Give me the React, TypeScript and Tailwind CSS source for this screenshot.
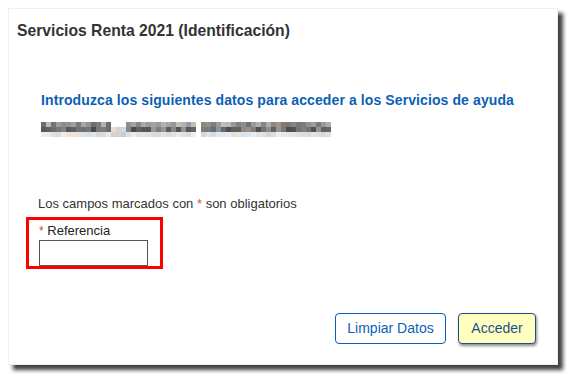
import React from 'react';

// pixelated (censored) name line
const segments: [number, number][] = [
  [0, 14],
  [17, 31],
  [32, 58],
];
const dash: [number, number] = [14, 17];

const shade = (i: number, row: number, light: boolean) => {
  const r = Math.abs(Math.sin(i * 12.9898 + row * 78.233) * 43758.5453) % 1;
  const base = light ? 215 : row === 0 ? 150 : row === 1 ? 115 : 226;
  const spread = light || row === 2 ? 24 : 80;
  const v = Math.round(base + (r - 0.5) * spread);
  const tint = Math.round((((r * 7) % 1) - 0.5) * 18);
  return `rgb(${v + tint}, ${v}, ${v - tint})`;
};

const Mosaic: React.FC = () => {
  const colour = (i: number, row: number) => {
    if (segments.some(([a, b]) => i >= a && i < b)) return shade(i, row, false);
    if (i >= dash[0] && i < dash[1] && row > 0) return shade(i, row, true);
    return 'transparent';
  };
  return (
    <div className="h-[16px] w-[295px]">
      {[0, 1, 2].map(row => (
        <div key={row} className="flex h-[5px]">
          {Array.from({ length: 59 }).map((_, i) => (
            <div key={i} className="w-[5px] h-[5px]" style={{ backgroundColor: colour(i, row) }} />
          ))}
        </div>
      ))}
    </div>
  );
};

const App: React.FC = () => {
  return (
    <div className="w-[567px] h-[374px] bg-white pt-2 pl-2" style={{ fontFamily: '"Liberation Sans", Arial, sans-serif' }}>
      <div className="w-[550px] h-[357px] bg-white border border-[#f0f0f0] shadow-[5px_5px_4px_rgba(0,0,0,0.75)] flex flex-col">
        <div className="pl-[8px] pt-[13px] h-[40px]">
          <h2 className="text-[15.7px] font-bold text-[#333] leading-[18px]">Servicios Renta 2021 (Identificación)</h2>
        </div>

        <div className="pl-[32px] pt-[43px]">
          <p className="text-[14px] font-bold text-[#0b5fb5] leading-[16px] tracking-[0.1px]">
            Introduzca los siguientes datos para acceder a los Servicios de ayuda
          </p>
          <div className="mt-[14px]">
            <Mosaic />
          </div>
        </div>

        <div className="pl-[29px] pt-[58px]">
          <p className="text-[13px] text-[#333] leading-[15px]">
            Los campos marcados con <span className="text-[#e0572a]">*</span> son obligatorios
          </p>
          <div className="mt-[6px] ml-[-12px] w-[137px] h-[52px] border-[3px] border-[#ff0000] pl-[10px] pt-[3px]">
            <label className="block text-[13px] text-[#222] leading-[16px]">
              <span className="text-[#d9452b] text-[12px]">*</span> Referencia
            </label>
            <input className="mt-[1px] block w-[109px] h-[26px] border border-[#555] bg-white outline-none" />
          </div>
        </div>

        <div className="mt-auto mb-[20px] mr-[21px] flex justify-end gap-[12px]">
          <button className="w-[111px] h-[31px] border border-[#0b5fb5] rounded-[4px] bg-white text-[14px] text-[#0b5fb5]">
            Limpiar Datos
          </button>
          <button className="w-[78px] h-[31px] border border-[#1b4f8a] rounded-[4px] bg-[#ffffc0] text-[14px] text-[#1b4f8a] shadow-[1px_2px_3px_rgba(0,0,0,0.45)]">
            Acceder
          </button>
        </div>
      </div>
    </div>
  );
};

export default App;
